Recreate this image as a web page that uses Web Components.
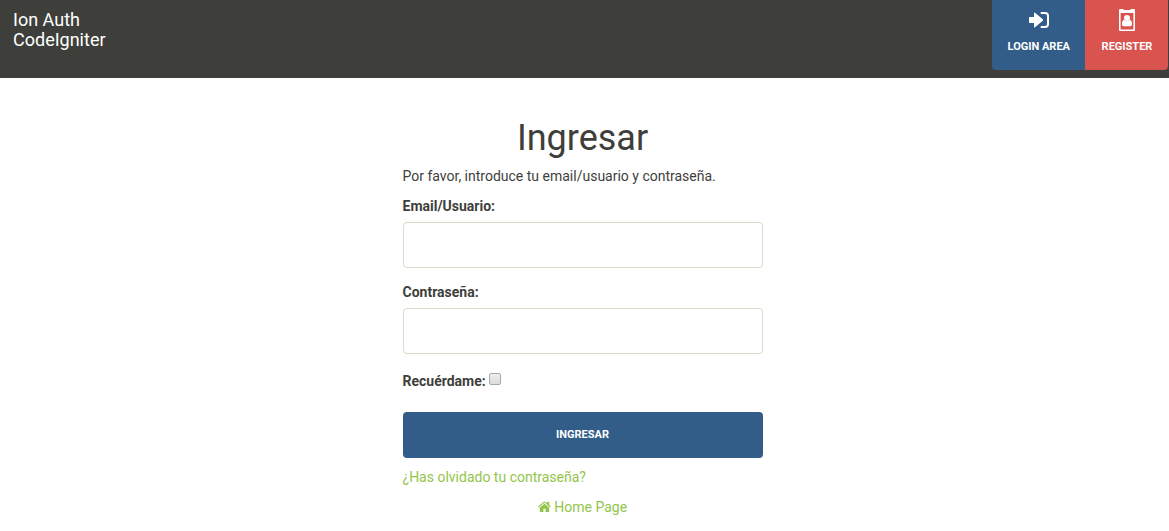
<!DOCTYPE html>
<html lang="es">
<head>
<meta charset="utf-8">
<meta name="viewport" content="width=device-width, initial-scale=1">
<title>Ingresar</title>
<style>
  :root {
    --ink: #3e3f3a;
    --primary: #325d88;
    --danger: #d9534f;
    --link: #93c54b;
    --line: #dfd7ca;
  }
  body {
    margin: 0;
    background: #fff;
    color: var(--ink);
    font: 14px/20px Roboto, sans-serif;
  }
</style>
</head>
<body>
<auth-header>
  <span slot="brand">Ion Auth<br>CodeIgniter</span>
  <nav-tile tone="primary" icon="login">Login area</nav-tile>
  <nav-tile tone="danger" icon="badge">Register</nav-tile>
</auth-header>
<login-form></login-form>

<script>
const icons = {
  login: `<svg width="20" height="16" viewBox="0 0 20 16" aria-hidden="true">
    <path fill="#fff" d="M0 5.5Q0 5 .5 5H5V1.2Q5 0 6 .8L13.8 7.2Q14.6 8 13.8 8.8L6 15.2Q5 16 5 14.8V11H.5Q0 11 0 10.5Z"/>
    <path fill="none" stroke="#fff" stroke-width="2" stroke-linecap="round" d="M12.5 1H16Q19 1 19 4V12Q19 15 16 15H12.5"/></svg>`,
  badge: `<svg width="16" height="22" viewBox="0 0 16 22" aria-hidden="true">
    <path fill="#fff" fill-rule="evenodd" d="M1 0H4.5V1H11.5V0H15Q16 0 16 1V21Q16 22 15 22H1Q0 22 0 21V1Q0 0 1 0ZM1.6 4V20.4H14.4V4Z"/>
    <circle cx="8" cy="9" r="3" fill="#fff"/>
    <path fill="#fff" d="M5 10.8Q8 13.6 11 10.8Q13 11.4 13 15.2Q13 17.2 11.4 17.2H4.6Q3 17.2 3 15.2Q3 11.4 5 10.8Z"/></svg>`,
  home: `<svg width="13" height="11" viewBox="0 0 13 11" aria-hidden="true">
    <path fill="currentColor" d="M6.5 2.7L11.2 6.5V10.4Q11.2 11 10.6 11H7.6V7.8H5.4V11H2.4Q1.8 11 1.8 10.4V6.5Z"/>
    <path fill="currentColor" d="M0 5.6L5.8.7Q6.5.2 7.2.7L9.2 2.4V.7H11.2V4.1L13 5.6L12.3 6.4L6.5 1.6L.7 6.4Z"/></svg>`
};

class AuthHeader extends HTMLElement {
  constructor() {
    super();
    this.attachShadow({ mode: 'open' }).innerHTML = `
      <style>
        :host { display: block; background: var(--ink); color: #fff; }
        header { display: flex; justify-content: space-between; align-items: flex-start; min-height: 78px; padding-right: 1px; box-sizing: border-box; }
        .brand { padding: 10px 13px; font-size: 18px; line-height: 20px; color: inherit; text-decoration: none; }
        nav { display: flex; border-radius: 0 0 4px 4px; overflow: hidden; }
      </style>
      <header>
        <a class="brand" href="#"><slot name="brand"></slot></a>
        <nav><slot></slot></nav>
      </header>`;
  }
}

class NavTile extends HTMLElement {
  constructor() {
    super();
    this.attachShadow({ mode: 'open' }).innerHTML = `
      <style>
        :host { display: block; min-width: 83px; }
        a { display: flex; flex-direction: column; align-items: center; height: 70px; padding: 0 15px 0 16px; box-sizing: border-box;
            background: var(--tone); color: #fff; text-decoration: none; text-transform: uppercase; font-size: 11px; font-weight: 700; line-height: 14px; }
        .icon { display: flex; align-items: center; height: 40px; }
      </style>
      <a href="#"><span class="icon"></span><slot></slot></a>`;
  }
  connectedCallback() {
    this.style.setProperty('--tone', `var(--${this.getAttribute('tone')})`);
    this.shadowRoot.querySelector('.icon').innerHTML = icons[this.getAttribute('icon')];
  }
}

class TextField extends HTMLElement {
  constructor() {
    super();
    this.attachShadow({ mode: 'open' }).innerHTML = `
      <style>
        :host { display: block; }
        label { display: block; margin-bottom: 6px; font-weight: 700; }
        input { display: block; width: 100%; height: 46px; box-sizing: border-box; padding: 12px 16px; border: 1px solid var(--line);
                border-radius: 4px; background: #fff; color: inherit; font: inherit; }
      </style>
      <label for="field"><slot></slot></label>
      <input id="field">`;
  }
  connectedCallback() {
    this.shadowRoot.querySelector('input').type = this.getAttribute('type') || 'text';
  }
}

class LoginForm extends HTMLElement {
  constructor() {
    super();
    this.attachShadow({ mode: 'open' }).innerHTML = `
      <style>
        :host { display: block; padding: 40px 4px 0 0; }
        main { width: 100%; max-width: 360px; margin: 0 auto; }
        h1 { margin: 0; font-size: 36px; line-height: 40px; font-weight: 400; text-align: center; }
        p { margin: 0; }
        .intro { margin: 8px 0 10px; }
        text-field { margin-bottom: 14px; }
        .remember { display: flex; gap: 3px; margin: 17px 0 21px; font-weight: 700; }
        input { appearance: none; width: 12px; height: 12px; margin: 2px 0 0; border: 1px solid #a9a9a9; border-radius: 2px;
                background: linear-gradient(#eee, #dcdcdc); }
        input:checked { background: var(--primary); }
        button { display: block; width: 100%; height: 46px; padding: 0; border: 0; border-radius: 4px; background: var(--primary); color: #fff;
                 font: 700 11px/16px Roboto, sans-serif; text-transform: uppercase; cursor: pointer; }
        a { color: var(--link); text-decoration: none; }
        .forgot { margin: 9px 0 10px; }
        .home { text-align: center; }
      </style>
      <main>
        <h1>Ingresar</h1>
        <p class="intro">Por favor, introduce tu email/usuario y contraseña.</p>
        <form>
          <text-field>Email/Usuario:</text-field>
          <text-field type="password">Contraseña:</text-field>
          <div class="remember"><label for="remember">Recuérdame:</label><input type="checkbox" id="remember"></div>
          <button type="submit">Ingresar</button>
        </form>
        <p class="forgot"><a href="#">¿Has olvidado tu contraseña?</a></p>
        <p class="home"><a href="#">${icons.home} Home Page</a></p>
      </main>`;
  }
}

customElements.define('nav-tile', NavTile);
customElements.define('auth-header', AuthHeader);
customElements.define('text-field', TextField);
customElements.define('login-form', LoginForm);
</script>
</body>
</html>
